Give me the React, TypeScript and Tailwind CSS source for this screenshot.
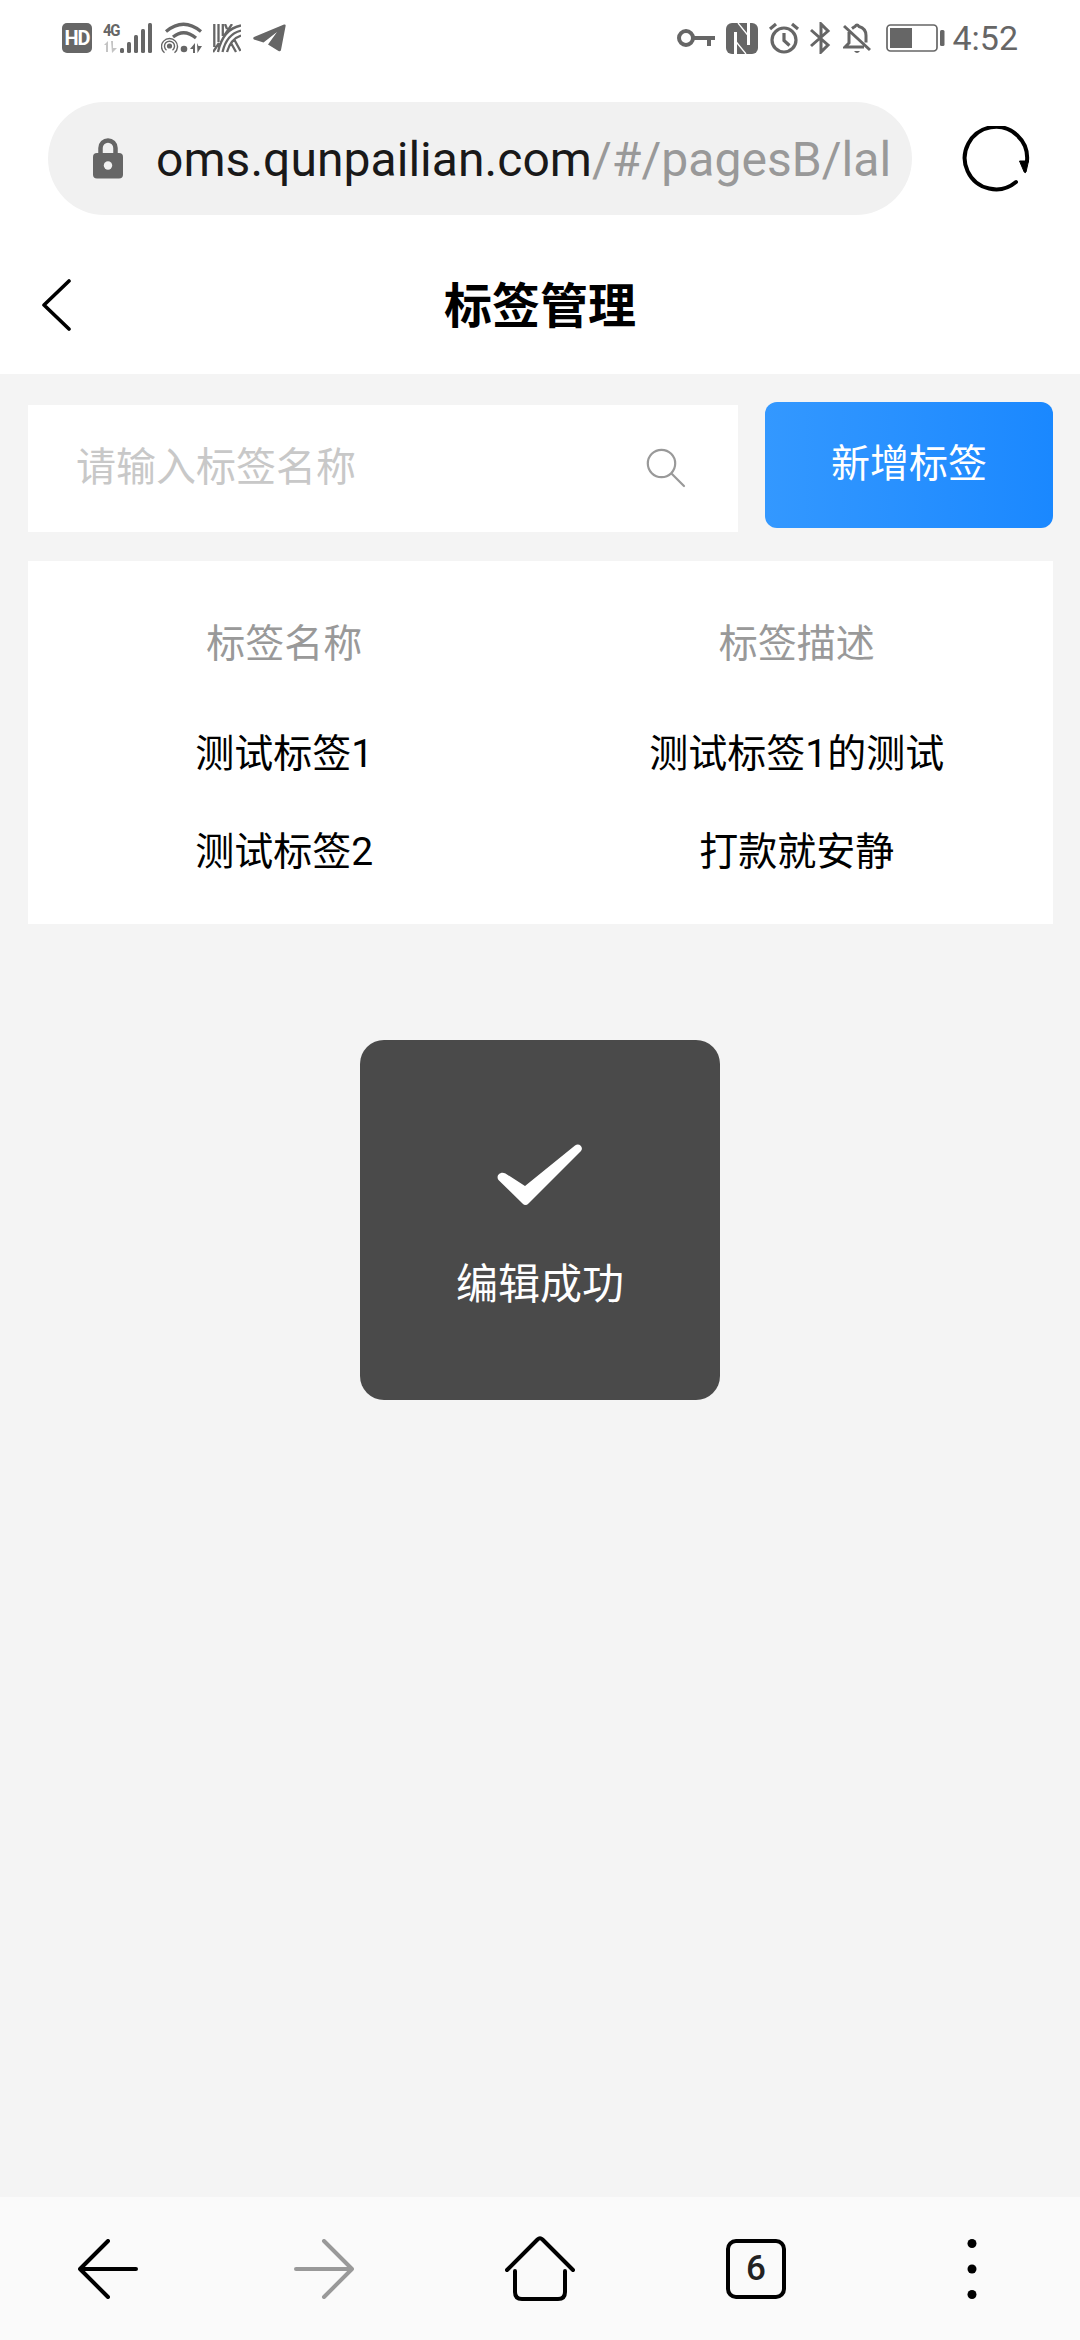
import React from "react";

const cjk = "font-[Roboto,'Noto_Sans_CJK_SC',sans-serif]";

function StatusBar() {
  return (
    <div className="flex h-[76px] shrink-0 items-center pl-[62px] pr-[62px] text-[#666]">
      <div className="flex h-[30px] w-[30px] items-center justify-center rounded-[5px] bg-[#666] text-[20px] font-bold leading-none tracking-[-1px] text-white">
        HD
      </div>
      <div className="ml-[11px] flex h-8 w-[50px] items-start">
        <span className="w-[18px] text-[17px] font-bold leading-[16px] tracking-[-1.5px]">
          <span className="inline-block origin-left scale-x-[0.88]">4G</span>
        </span>
        <svg width="50" height="32" viewBox="0 0 50 32" className="-ml-[18px] shrink-0" fill="currentColor">
          <g fill="#c4c4c4">
            <path d="M1 23l4-4v11H3v-7zM8 19h2v7h4l-5 5z" />
          </g>
          <rect x="17" y="26" width="4" height="5" rx="1.5" />
          <rect x="24" y="20" width="4" height="11" rx="1.5" />
          <rect x="31" y="13" width="4" height="18" rx="1.5" />
          <rect x="38" y="7" width="4" height="24" rx="1.5" />
          <rect x="45" y="1" width="4" height="30" rx="1.5" />
        </svg>
      </div>
      <svg width="42" height="32" viewBox="0 0 42 32" className="ml-2" fill="none" stroke="currentColor">
        <path d="M5 9.500Q22.500-5 40 9.500" strokeWidth="3.200" />
        <path d="M12 15Q23 6 35 16" strokeWidth="3.200" />
        <circle cx="8.500" cy="24" r="2.600" fill="currentColor" stroke="none" />
        <path d="M5.500 28.200a5 5 0 1 1 6 0M3.500 30.800a8 8 0 1 1 10 0" strokeWidth="1.400" />
        <circle cx="23" cy="27" r="3.300" fill="currentColor" stroke="none" />
        <path d="M29 27l5-6v10h-2v-4zM36 21l1.500 3H41l-4.500 7z" fill="currentColor" stroke="none" />
      </svg>
      <svg width="28" height="29" viewBox="0 0 28 29" className="ml-[10px]" fill="none" stroke="currentColor" strokeWidth="2.300">
        <path d="M1.300 0v23M5.500 0v18M9.800 0v12M11 12L19 0M0 28L6 19M5 28C8 14 15 4 28 1.500M9.500 28C12 17 18 9 28 6.500M14 28C16 21 20 14 28 11.500M18 19l5 9M21.500 16l6 11M12 0l2 5" />
      </svg>
      <svg width="33" height="28" viewBox="0 0 33 28" className="ml-3" fill="currentColor">
        <path d="M1 13L31 .5q2-.5 1.600 1.500L28 26q-.5 2-2.500 1L15 20.500 24 8 10.500 18.500 1 15.500q-1.500-1.300 0-2.500z" />
      </svg>

      <div className="flex-1" />

      <svg width="39" height="22" viewBox="0 0 39 22" fill="none" stroke="currentColor" strokeWidth="4">
        <circle cx="9" cy="11" r="7" />
        <path d="M16 11h22M32 11v8" />
      </svg>
      <svg width="32" height="31" viewBox="0 0 32 31" className="ml-[10px]" fill="none">
        <rect width="32" height="31" rx="6" fill="#666" />
        <path d="M9.500 31V9M22.500 0v22" stroke="#fff" strokeWidth="3" />
        <path d="M12 0L22.500 13M20 31L9.500 18" stroke="#fff" strokeWidth="1.300" />
      </svg>
      <svg width="32" height="32" viewBox="0 0 32 32" className="ml-[10px]" fill="none" stroke="currentColor" strokeWidth="3.200">
        <circle cx="16" cy="18" r="12" />
        <path d="M16 11v7.500l5.500 5M2 7l6-5M30 7l-6-5" />
      </svg>
      <svg width="22" height="32" viewBox="0 0 22 32" className="ml-[9px]" fill="none" stroke="currentColor" strokeWidth="3">
        <path d="M2 8l17 15-7 7V2l7 7L2 24" />
      </svg>
      <svg width="28" height="32" viewBox="0 0 28 32" className="ml-[12px]" fill="none" stroke="currentColor" strokeWidth="3">
        <path d="M1 4l26 24M6 10v11l-4 4h19M9 6.500q2-1.500 3-2 2-3 4 0 7 2 7 9v7" />
        <path d="M11 29h6q-3 4-6 0z" fill="currentColor" stroke="none" />
      </svg>
      <svg width="60" height="28" viewBox="0 0 60 28" className="ml-[15px]" fill="currentColor">
        <rect x="1" y="1" width="50" height="26" rx="3.500" fill="none" stroke="currentColor" strokeWidth="1.700" />
        <rect x="4" y="4" width="22" height="20" />
        <rect x="54" y="6" width="4.500" height="16" rx="1.500" />
      </svg>
      <span className="ml-[6px] text-[34px] leading-none">4:52</span>
    </div>
  );
}

function AddressBar() {
  return (
    <div className="mt-[26px] flex h-[113px] shrink-0 items-center pl-12">
      <div className="flex h-[113px] w-[864px] items-center rounded-full bg-[#f1f1f1] pl-[45px]">
        <svg width="30" height="41" viewBox="0 0 30 41" fill="#666">
          <path d="M7.500 17V10a7.500 7.500 0 0 1 15 0v7" fill="none" stroke="#666" strokeWidth="4.500" />
          <rect y="15" width="30" height="25.500" rx="4" />
          <circle cx="15" cy="27.500" r="4.200" fill="#f1f1f1" />
        </svg>
        <span className="ml-[33px] whitespace-nowrap pt-[3px] text-[48px] leading-none tracking-[0.05px] text-[#191919]">
          oms.qunpailian.com<span className="text-[#999]">/#/pagesB/lal</span>
        </span>
      </div>
      <svg width="68" height="68" viewBox="0 0 68 68" className="ml-[50px] mt-[3px]">
        <path d="M54 56A31.200 31.200 0 1 1 65 35" fill="none" stroke="#000" strokeWidth="4" strokeLinecap="round" />
        <path d="M57.500 35h9L64 46q-.8 1.500-1.800 0z" fill="#000" stroke="#000" strokeLinejoin="round" />
      </svg>
    </div>
  );
}

function TitleBar() {
  return (
    <div className="grid h-[159px] shrink-0 grid-cols-[120px_1fr_120px] items-center pt-[20px]">
      <svg width="32" height="52" viewBox="0 0 32 52" className="ml-[41px]" fill="none" stroke="#000" strokeWidth="3.600" strokeLinecap="round" strokeLinejoin="round">
        <path d="M28 2L3 26l25 24" />
      </svg>
      <h1 className="pt-1 text-center text-[48px] font-bold leading-none text-black">标签管理</h1>
    </div>
  );
}

const rows = [
  ["测试标签1", "测试标签1的测试"],
  ["测试标签2", "打款就安静"],
];

function Toast() {
  return (
    <div className="absolute left-[360px] top-[1040px] flex h-[360px] w-[360px] flex-col items-center rounded-3xl bg-[#4a4a4a] pt-[104px] text-white">
      <svg width="86" height="62" viewBox="0 0 86 62" fill="#fff">
        <path d="M8.500 29.500L28 42 78 1.500C82-1.500 87 3 84 7L31.500 59.500q-3 3-6 0L2 36.500c-4-4 1-10 6.500-7z" />
      </svg>
      <span className="mt-[58px] text-[42px] leading-[42px]">编辑成功</span>
    </div>
  );
}

function BottomBar() {
  return (
    <div className="grid h-[143px] shrink-0 grid-cols-5 items-center justify-items-center bg-[#fafafa] text-black">
      <svg width="60" height="60" viewBox="0 0 60 60" fill="none" stroke="currentColor" strokeWidth="4" strokeLinecap="round" strokeLinejoin="round">
        <path d="M30 2L2 30l28 28M2 30h56" />
      </svg>
      <svg width="60" height="60" viewBox="0 0 60 60" fill="none" stroke="#999" strokeWidth="4" strokeLinecap="round" strokeLinejoin="round">
        <path d="M30 2l28 28-28 28M58 30H2" />
      </svg>
      <svg width="70" height="66" viewBox="0 0 70 66" fill="none" stroke="currentColor" strokeWidth="4" strokeLinecap="round" strokeLinejoin="round">
        <path d="M2 34L32.500 3.500q2.500-2.500 5 0L68 34M10 35v21q0 7 7 7h36q7 0 7-7V35" />
      </svg>
      <div className="flex h-[60px] w-[60px] items-center justify-center rounded-[10px] border-4 border-black text-[35px] font-medium leading-none text-[#222]">
        6
      </div>
      <svg width="10" height="62" viewBox="0 0 10 62" fill="currentColor">
        <circle cx="5" cy="5.500" r="4.500" />
        <circle cx="5" cy="31" r="4.500" />
        <circle cx="5" cy="56.500" r="4.500" />
      </svg>
    </div>
  );
}

export default function App() {
  return (
    <div className={`relative flex h-[2340px] w-[1080px] flex-col overflow-hidden bg-white ${cjk}`}>
      <StatusBar />
      <AddressBar />
      <TitleBar />
      <main className="flex flex-1 flex-col bg-[#f4f4f4] pl-7 pr-[27px] pt-7">
        <div className="flex items-start gap-[27px]">
          <div className="mt-[3px] flex h-[127px] flex-1 items-center justify-between bg-white pb-0.5 pl-12 pr-[52px]">
            <span className="text-[40px] leading-none text-[#c8c8c8]">请输入标签名称</span>
            <svg width="40" height="40" viewBox="0 0 40 40" fill="none" stroke="#999" strokeWidth="2.200" strokeLinecap="round">
              <circle cx="15.500" cy="15.500" r="13.700" />
              <path d="M26 26l12 12" />
            </svg>
          </div>
          <button className="h-[126px] w-[288px] rounded-xl bg-linear-to-r from-[#3398ff] to-[#1a88ff] pb-0.5 text-[39px] leading-none text-white">
            新增标签
          </button>
        </div>
        <section className="mt-[29px] h-[363px] bg-white pt-[31px] text-center text-[39px] leading-none text-black">
          <div className="mb-[9px] grid h-[104px] grid-cols-2 items-center text-[#999]">
            <span>标签名称</span>
            <span>标签描述</span>
          </div>
          {rows.map(([name, description]) => (
            <div key={name} className="grid h-[98px] grid-cols-2 items-center">
              <span>{name}</span>
              <span>{description}</span>
            </div>
          ))}
        </section>
      </main>
      <BottomBar />
      <Toast />
    </div>
  );
}
